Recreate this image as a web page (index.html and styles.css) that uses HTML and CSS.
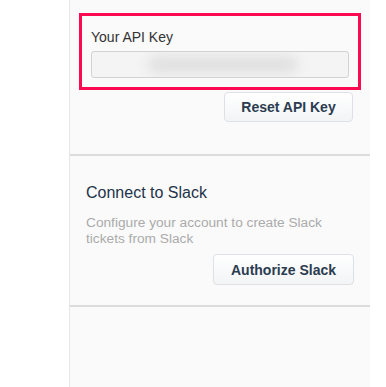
FILE: index.html
```html
<!DOCTYPE html>
<html lang="en">

<head>
    <meta charset="UTF-8">
    <meta name="viewport" content="width=device-width, initial-scale=1.0">
    <title>Integrations</title>
    <link rel="stylesheet" href="styles.css">
</head>

<body>
    <div class="layout">
        <aside class="sidebar"></aside>

        <main class="panel">
            <section class="section api-section">
                <div class="highlight">
                    <label class="field-label" for="api-key">Your API Key</label>
                    <div class="key-input" id="api-key">
                        <span class="key-blur"></span>
                    </div>
                </div>
                <div class="actions">
                    <button class="btn reset-btn" type="button">Reset API Key</button>
                </div>
            </section>

            <section class="section slack-section">
                <h2 class="section-title">Connect to Slack</h2>
                <p class="section-desc">Configure your account to create Slack tickets from Slack</p>
                <div class="actions">
                    <button class="btn slack-btn" type="button">Authorize Slack</button>
                </div>
            </section>
        </main>
    </div>
</body>

</html>
```

FILE: styles.css
```css
:root {
    --panel-bg: #fafafa;
    --line: #dcdcdc;
    --highlight: #fb0a51;
    --text-dark: #1f3349;
}

* {
    margin: 0;
    padding: 0;
    box-sizing: border-box;
}

body {
    font-family: "Liberation Sans", Arial, sans-serif;
    background: #ffffff;
}

.layout {
    display: flex;
    height: 387px;
}

.sidebar {
    width: 69px;
}

.panel {
    width: 301px;
    background: var(--panel-bg);
    border-left: 1px solid #e6e6e6;
}

.section {
    border-bottom: 2px solid var(--line);
}

.api-section {
    padding: 13px 17px 32px 9px;
}

.highlight {
    width: 282px;
    padding: 13px 9px 9px 9px;
    border: 3px solid var(--highlight);
}

.field-label {
    display: block;
    font-size: 14px;
    line-height: 17px;
    color: #333333;
    margin-bottom: 5px;
}

.key-input {
    position: relative;
    height: 27px;
    background: #f4f4f4;
    border: 1px solid #d2d2d2;
    border-radius: 3px;
    overflow: hidden;
}

.key-blur {
    position: absolute;
    top: 4px;
    left: 56px;
    width: 150px;
    height: 17px;
    background: #e0e0e0;
    border-radius: 8px;
    filter: blur(6px);
}

.actions {
    display: flex;
    justify-content: flex-end;
}

.btn {
    font-family: inherit;
    font-size: 14px;
    font-weight: bold;
    color: #2b3c50;
    background: linear-gradient(#ffffff, #f2f4f6);
    border: 1px solid #dde1e5;
    border-radius: 4px;
    cursor: pointer;
}

.reset-btn {
    margin-top: 2px;
    width: 129px;
    height: 30px;
}

.slack-section {
    padding: 27px 16px 20px 16px;
}

.section-title {
    font-size: 16px;
    font-weight: normal;
    line-height: 20px;
    color: var(--text-dark);
}

.section-desc {
    margin-top: 12px;
    font-size: 13.7px;
    line-height: 16px;
    color: #ababab;
    padding-right: 14px;
}

.slack-btn {
    margin-top: 7px;
    width: 141px;
    height: 31px;
}
```
